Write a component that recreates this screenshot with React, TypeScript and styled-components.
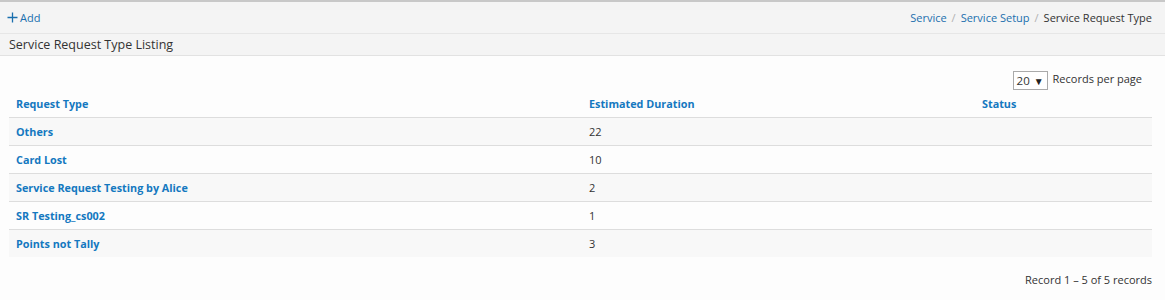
import React from "react";
import styled, { createGlobalStyle } from "styled-components";

const GlobalStyle = createGlobalStyle`
  html, body {
    margin: 0;
    padding: 0;
    background: #fdfdfd;
    font-family: "Open Sans", "Noto Sans", Arial, sans-serif;
    font-size: 11px;
    color: #333333;
  }
`;

const rows = [
  { type: "Others", duration: "22", status: "" },
  { type: "Card Lost", duration: "10", status: "" },
  { type: "Service Request Testing by Alice", duration: "2", status: "" },
  { type: "SR Testing_cs002", duration: "1", status: "" },
  { type: "Points not Tally", duration: "3", status: "" },
];

export default function App() {
  return (
    <Page>
      <GlobalStyle />
      <Toolbar>
        <AddButton>
          <svg width="11" height="11" viewBox="0 0 11 11">
            <path d="M5.5 0.5v10M0.5 5.5h10" stroke="#1a6fae" strokeWidth="1.3" fill="none" />
          </svg>
          Add
        </AddButton>
        <Breadcrumb>
          <Crumb href="#">Service</Crumb>
          <Sep>/</Sep>
          <Crumb href="#">Service Setup</Crumb>
          <Sep>/</Sep>
          <Current>Service Request Type</Current>
        </Breadcrumb>
      </Toolbar>
      <TitleBar>Service Request Type Listing</TitleBar>
      <Content>
        <PerPage>
          <PageSelect>
            20 <span>▼</span>
          </PageSelect>
          Records per page
        </PerPage>
        <Table>
          <colgroup>
            <col style={{ width: 573 }} />
            <col style={{ width: 393 }} />
            <col />
          </colgroup>
          <thead>
            <tr>
              <Th>Request Type</Th>
              <Th>Estimated Duration</Th>
              <Th>Status</Th>
            </tr>
          </thead>
          <tbody>
            {rows.map((r, i) => (
              <Row key={r.type} $odd={i % 2 === 0}>
                <Td>
                  <RowLink href="#">{r.type}</RowLink>
                </Td>
                <Td>{r.duration}</Td>
                <Td>{r.status}</Td>
              </Row>
            ))}
          </tbody>
        </Table>
        <Footer>Record 1 – 5 of 5 records</Footer>
      </Content>
    </Page>
  );
}

const Page = styled.div`
  width: 1165px;
  height: 300px;
  border-top: 2px solid #c8c8c8;
  box-sizing: border-box;
  background: #fdfdfd;
`;

const Toolbar = styled.div`
  height: 32px;
  background: #f4f4f4;
  border-bottom: 1px solid #e6e6e6;
  display: flex;
  align-items: center;
  justify-content: space-between;
  padding: 0 13px 0 7px;
  box-sizing: border-box;
`;

const AddButton = styled.a`
  display: flex;
  align-items: center;
  gap: 2px;
  color: #1a6fae;
  font-size: 11px;
  cursor: pointer;
`;

const Breadcrumb = styled.div`
  display: flex;
  align-items: center;
  gap: 5px;
`;

const Crumb = styled.a`
  color: #1a6fae;
  text-decoration: none;
`;

const Sep = styled.span`
  color: #b0b0b0;
`;

const Current = styled.span`
  color: #333333;
`;

const TitleBar = styled.div`
  height: 21px;
  background: #f4f4f4;
  border-bottom: 1px solid #e2e2e2;
  display: flex;
  align-items: center;
  padding-left: 9px;
  font-size: 12.5px;
  color: #333333;
`;

const Content = styled.div`
  padding: 15px 13px 0 9px;
`;

const PerPage = styled.div`
  display: flex;
  justify-content: flex-end;
  align-items: flex-start;
  gap: 5px;
  padding-right: 10px;
  height: 19px;
`;

const PageSelect = styled.div`
  width: 35px;
  height: 19px;
  box-sizing: border-box;
  border: 1px solid #aaaaaa;
  background: #ffffff;
  display: flex;
  align-items: center;
  justify-content: space-between;
  padding: 0 3px 0 3px;
  font-size: 11.5px;

  span {
    font-size: 10px;
    color: #222222;
  }
`;

const Table = styled.table`
  width: 1143px;
  border-collapse: collapse;
  table-layout: fixed;
`;

const Th = styled.th`
  text-align: left;
  height: 27px;
  padding: 0 7px;
  color: #1478c0;
  font-weight: 700;
  font-size: 10.8px;
  border-bottom: 1px solid #dddddd;
`;

const Row = styled.tr<{ $odd: boolean }>`
  background: ${(p) => (p.$odd ? "#f8f8f8" : "#fdfdfd")};

  &:not(:last-child) td {
    border-bottom: 1px solid #dddddd;
  }
`;

const Td = styled.td`
  height: 27px;
  padding: 0 7px;
  color: #333333;
`;

const RowLink = styled.a`
  color: #1478c0;
  font-weight: 700;
  font-size: 10.8px;
  text-decoration: none;
`;

const Footer = styled.div`
  text-align: right;
  margin-top: 15px;
`;
